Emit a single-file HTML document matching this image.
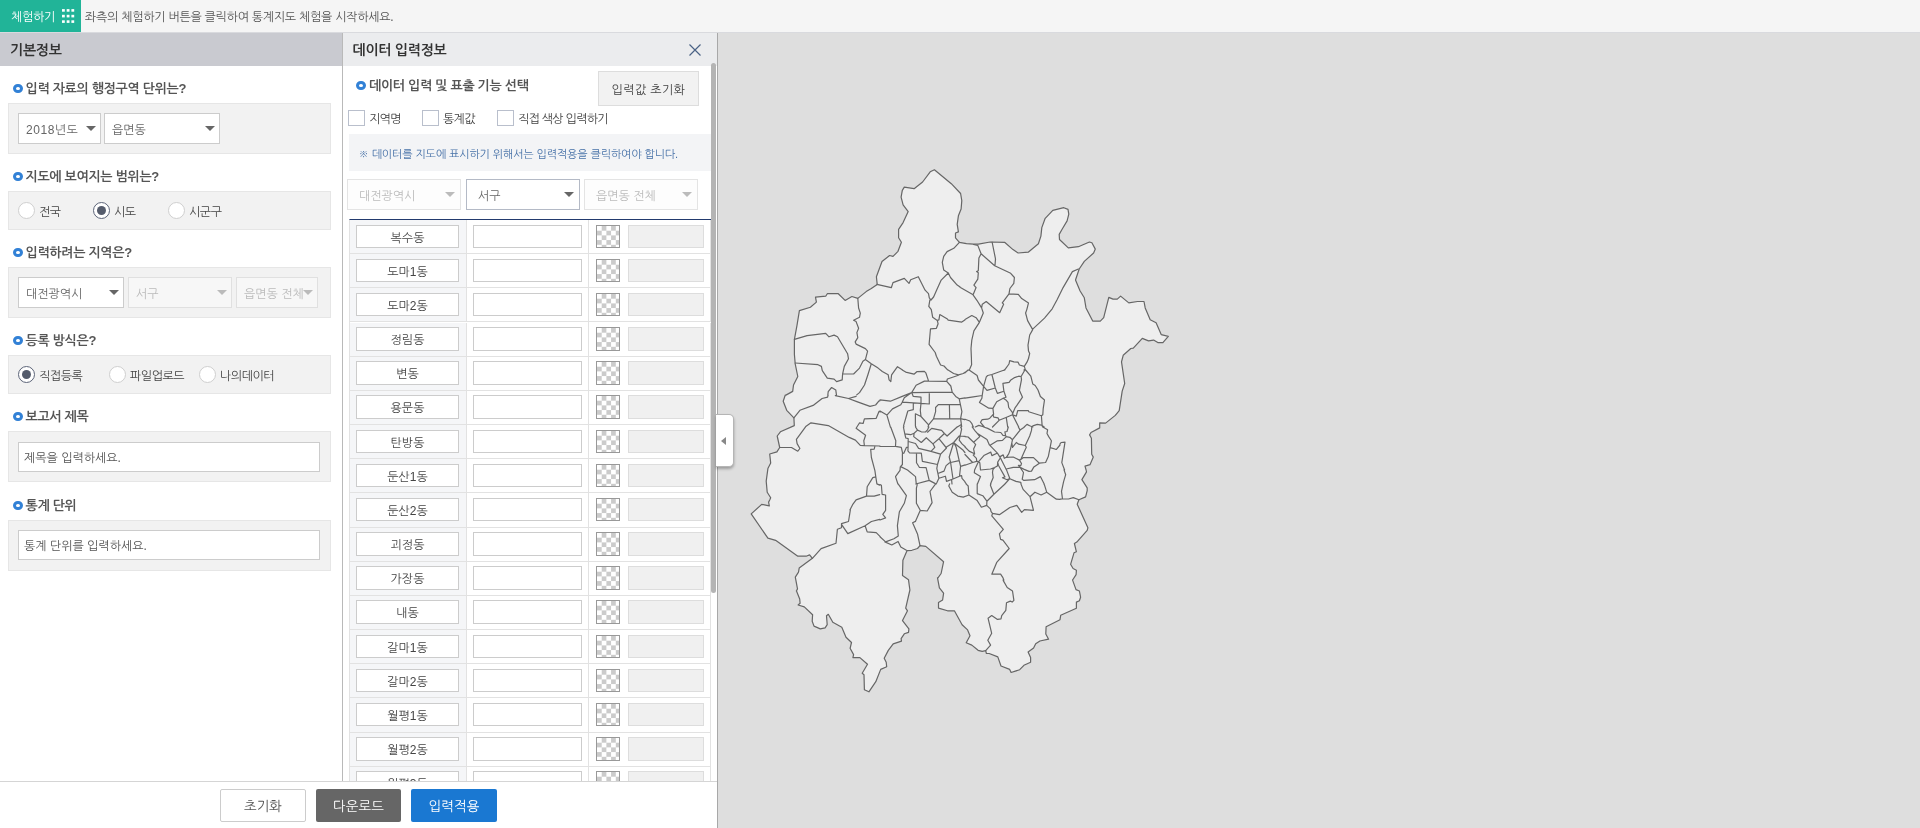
<!DOCTYPE html>
<html lang="ko">
<head>
<meta charset="utf-8">
<title>통계지도 체험하기</title>
<style>
*{box-sizing:border-box;margin:0;padding:0}
html,body{width:1920px;height:828px;overflow:hidden;background:#dedede}
body{font-family:"Liberation Sans","NanumGothic","Noto Sans CJK KR",sans-serif;font-size:12px;color:#444;position:relative}
.abs{position:absolute}
#wrap{position:absolute;left:0;top:0;width:1920px;height:828px;will-change:transform}
#topbar{left:0;top:0;width:1920px;height:32px;background:#f5f5f5}
#try{left:0;top:0;width:81px;height:32px;background:#21b498;color:#fff;font-size:12px;line-height:34px;padding-left:11px;letter-spacing:-0.3px}
#try i{position:absolute;width:3px;height:3px;background:#fff}
#toptxt{left:85px;top:0;height:32px;line-height:34px;font-size:12px;color:#555;letter-spacing:-0.25px;white-space:nowrap}
#left{left:0;top:32px;width:342px;height:750px;background:#fff}
#lefthd{left:0;top:32px;width:342px;height:34px;background:#c9cad0;font-size:14px;font-weight:bold;color:#333;line-height:36px;padding-left:10px;letter-spacing:-0.25px}
#vline{left:342px;top:32px;width:1px;height:750px;background:#b9b9b9}
#mid{left:343px;top:32px;width:374px;height:750px;background:#fff}
#midhd{left:343px;top:32px;width:374px;height:34px;background:#ebecee;font-size:14px;font-weight:bold;color:#333;line-height:36px;padding-left:9.5px;letter-spacing:-0.25px}
.st{font-size:13px;color:#555;font-weight:bold;letter-spacing:-0.3px;white-space:nowrap;height:20px;line-height:22px}
.bul{width:10px;height:9.4px;border-radius:50%;border:3.2px solid #3281d6;background:#fff}
.box{left:8px;width:323px;background:#f2f2f2;border:1px solid #e6e6e6}
.sel{height:31px;background:#fff;border:1px solid #ccc;font-size:12px;color:#666;line-height:33px;padding-left:7px;letter-spacing:0;white-space:nowrap;overflow:hidden}
.sel.dis{background:#f7f7f7;border-color:#e0e0e0;color:#bbb}
.sel:after{content:"";position:absolute;right:4px;top:12px;border-left:5px solid transparent;border-right:5px solid transparent;border-top:5.5px solid #666}
.sel.dis:after{border-top-color:#bbb}
.sel.m:after{right:5.5px}
.sel.dis.m{background:#fdfdfd;border-color:#e4e4e4}
.rad{width:17px;height:17px;border-radius:50%;background:#fff;border:1px solid #cfcfcf}
.rad.on{border:1.5px solid #5c6478}
.rad.on:after{content:"";position:absolute;left:2.5px;top:2.5px;width:9px;height:9px;border-radius:50%;background:#555c6c}
.rl{font-size:12px;color:#444;height:16px;line-height:16px;white-space:nowrap;letter-spacing:-0.45px}
.inp{background:#fff;border:1px solid #ccc;font-size:12px;letter-spacing:0;color:#555;white-space:nowrap}
.chk{width:17px;height:16px;background:#fff;border:1px solid #b9bfcc}
.row{position:absolute;left:0;width:361px;height:34.17px;border-bottom:1px solid #e2e2e2;border-right:1px solid #e2e2e2}
.row div{position:absolute}
.c1{left:0;top:0;width:117px;height:100%;background:#f5f6f8;border-right:1px solid #e2e2e2}
.nm{left:6px;top:4.6px;width:103px;height:23.5px;background:#fff;border:1px solid #ccc;font-size:12px;line-height:25px;overflow:hidden;text-align:center;color:#444;letter-spacing:0}
.vl{left:123px;top:4.6px;width:109px;height:23.5px;background:#fff;border:1px solid #ccc}
.vl:before{content:"";position:absolute;left:114px;top:-6px;width:1px;height:35px;background:#e2e2e2}
.sw{left:246px;top:4.6px;width:24px;height:23.5px;border:1px solid #999;background:repeating-conic-gradient(#cbcbcb 0 25%,#fff 0 50%) 0 0/9.4px 9.4px}
.ct{left:278px;top:4.6px;width:76px;height:23.5px;background:#f0f0f0;border:1px solid #ddd}
#bottom{left:0;top:781px;width:717px;height:47px;background:#fff;border-top:1px solid #d5d5d5}
.btn{top:789px;height:33px;line-height:36px;text-align:center;font-size:13.5px;border-radius:2px;letter-spacing:0px;overflow:hidden}
</style>
</head>
<body>
<div id="wrap">
<div id="topbar" class="abs"></div>
<div id="try" class="abs">체험하기</div>
<svg class="abs" style="left:60px;top:8px" width="16" height="16" viewBox="60 8 16 16" fill="#fff"><rect x="62" y="9.1" width="2.8" height="2.6"/><rect x="66.7" y="9.1" width="2.8" height="2.6"/><rect x="71.4" y="9.1" width="2.8" height="2.6"/><rect x="62" y="14.8" width="2.8" height="2.6"/><rect x="66.7" y="14.8" width="2.8" height="2.6"/><rect x="71.4" y="14.8" width="2.8" height="2.6"/><rect x="62" y="20.3" width="2.8" height="2.6"/><rect x="66.7" y="20.3" width="2.8" height="2.6"/><rect x="71.4" y="20.3" width="2.8" height="2.6"/></svg>
<div id="toptxt" class="abs">좌측의 체험하기 버튼을 클릭하여 통계지도 체험을 시작하세요.</div>

<div id="left" class="abs"></div>
<div id="lefthd" class="abs">기본정보</div>
<div id="mid" class="abs"></div>
<div id="midhd" class="abs">데이터 입력정보</div>
<div id="vline" class="abs"></div>
<div class="abs" style="left:0;top:32px;width:717px;height:1px;background:#d9dade"></div>

<!-- LEFT-CONTENT -->
<!-- section 1 -->
<div class="abs bul" style="left:13px;top:84px"></div>
<div class="abs st" style="left:25.5px;top:78px">입력 자료의 행정구역 단위는?</div>
<div class="abs box" style="top:103px;height:51px"></div>
<div class="abs sel" style="left:18px;top:113px;width:83px"><span style="letter-spacing:0.6px">2018</span>년도</div>
<div class="abs sel" style="left:104px;top:113px;width:116px">읍면동</div>
<!-- section 2 -->
<div class="abs bul" style="left:13px;top:172px"></div>
<div class="abs st" style="left:25.5px;top:166px">지도에 보여지는 범위는?</div>
<div class="abs box" style="top:191px;height:39px"></div>
<div class="abs rad" style="left:18px;top:202px"></div><div class="abs rl" style="left:39px;top:204px">전국</div>
<div class="abs rad on" style="left:93px;top:202px"></div><div class="abs rl" style="left:114px;top:204px">시도</div>
<div class="abs rad" style="left:168px;top:202px"></div><div class="abs rl" style="left:189px;top:204px">시군구</div>
<!-- section 3 -->
<div class="abs bul" style="left:13px;top:248px"></div>
<div class="abs st" style="left:25.5px;top:242px">입력하려는 지역은?</div>
<div class="abs box" style="top:267px;height:51px"></div>
<div class="abs sel" style="left:18px;top:277px;width:106px">대전광역시</div>
<div class="abs sel dis" style="left:128px;top:277px;width:104px">서구</div>
<div class="abs sel dis" style="left:236px;top:277px;width:82px">읍면동 전체</div>
<!-- section 4 -->
<div class="abs bul" style="left:13px;top:336px"></div>
<div class="abs st" style="left:25.5px;top:330px">등록 방식은?</div>
<div class="abs box" style="top:355px;height:39px"></div>
<div class="abs rad on" style="left:18px;top:366px"></div><div class="abs rl" style="left:39px;top:368px">직접등록</div>
<div class="abs rad" style="left:109px;top:366px"></div><div class="abs rl" style="left:130px;top:368px">파일업로드</div>
<div class="abs rad" style="left:199px;top:366px"></div><div class="abs rl" style="left:220px;top:368px">나의데이터</div>
<!-- section 5 -->
<div class="abs bul" style="left:13px;top:412px"></div>
<div class="abs st" style="left:25.5px;top:406px">보고서 제목</div>
<div class="abs box" style="top:431px;height:51px"></div>
<div class="abs inp" style="left:18px;top:442px;width:302px;height:30px;line-height:31px;padding-left:5px">제목을 입력하세요.</div>
<!-- section 6 -->
<div class="abs bul" style="left:13px;top:501px"></div>
<div class="abs st" style="left:25.5px;top:495px">통계 단위</div>
<div class="abs box" style="top:520px;height:51px"></div>
<div class="abs inp" style="left:18px;top:530px;width:302px;height:30px;line-height:31px;padding-left:5px">통계 단위를 입력하세요.</div>


<!-- MID-CONTENT -->
<svg class="abs" style="left:688px;top:43px" width="14" height="14" viewBox="0 0 14 14"><path d="M1.5 1.5L12.5 12.5M12.5 1.5L1.5 12.5" stroke="#4a6285" stroke-width="1.2" fill="none"/></svg>
<div class="abs bul" style="left:356px;top:80.6px"></div>
<div class="abs st" style="left:369px;top:75px">데이터 입력 및 표출 기능 선택</div>
<div class="abs" style="left:598px;top:71px;width:101px;height:35px;background:#f2f2f2;border:1px solid #ddd;font-size:12px;line-height:37px;overflow:hidden;text-align:center;color:#444;letter-spacing:0.4px">입력값 초기화</div>
<div class="abs chk" style="left:348px;top:110px"></div><div class="abs rl" style="left:369px;top:111px;letter-spacing:-0.7px">지역명</div>
<div class="abs chk" style="left:422px;top:110px"></div><div class="abs rl" style="left:443px;top:111px;letter-spacing:-0.7px">통계값</div>
<div class="abs chk" style="left:497px;top:110px"></div><div class="abs rl" style="left:518px;top:111px;letter-spacing:-0.7px">직접 색상 입력하기</div>
<div class="abs" style="left:349px;top:134px;width:362px;height:37px;background:#f3f4f6"></div>
<div class="abs" style="left:358.5px;top:134px;height:37px;line-height:40px;font-size:11px;color:#4872a8;letter-spacing:-0.13px;white-space:nowrap">※ 데이터를 지도에 표시하기 위해서는 입력적용을 클릭하여야 합니다.</div>
<div class="abs sel dis m" style="left:347px;top:179px;width:114px;padding-left:11px">대전광역시</div>
<div class="abs sel m" style="left:466px;top:179px;width:114px;padding-left:11px;border-color:#b4bac6">서구</div>
<div class="abs sel dis m" style="left:584px;top:179px;width:114px;padding-left:11px">읍면동 전체</div>
<div id="tbl" class="abs" style="left:349px;top:219px;width:362px;height:562px;overflow:hidden;border-top:1px solid #223a6e;border-left:1px solid #e2e2e2">
<div class="row" style="top:0.0px"><div class="c1"></div><div class="nm">복수동</div><div class="vl"></div><div class="sw"></div><div class="ct"></div></div>
<div class="row" style="top:34.17px"><div class="c1"></div><div class="nm">도마1동</div><div class="vl"></div><div class="sw"></div><div class="ct"></div></div>
<div class="row" style="top:68.34px"><div class="c1"></div><div class="nm">도마2동</div><div class="vl"></div><div class="sw"></div><div class="ct"></div></div>
<div class="row" style="top:102.51px"><div class="c1"></div><div class="nm">정림동</div><div class="vl"></div><div class="sw"></div><div class="ct"></div></div>
<div class="row" style="top:136.68px"><div class="c1"></div><div class="nm">변동</div><div class="vl"></div><div class="sw"></div><div class="ct"></div></div>
<div class="row" style="top:170.85px"><div class="c1"></div><div class="nm">용문동</div><div class="vl"></div><div class="sw"></div><div class="ct"></div></div>
<div class="row" style="top:205.02px"><div class="c1"></div><div class="nm">탄방동</div><div class="vl"></div><div class="sw"></div><div class="ct"></div></div>
<div class="row" style="top:239.19px"><div class="c1"></div><div class="nm">둔산1동</div><div class="vl"></div><div class="sw"></div><div class="ct"></div></div>
<div class="row" style="top:273.36px"><div class="c1"></div><div class="nm">둔산2동</div><div class="vl"></div><div class="sw"></div><div class="ct"></div></div>
<div class="row" style="top:307.53px"><div class="c1"></div><div class="nm">괴정동</div><div class="vl"></div><div class="sw"></div><div class="ct"></div></div>
<div class="row" style="top:341.7px"><div class="c1"></div><div class="nm">가장동</div><div class="vl"></div><div class="sw"></div><div class="ct"></div></div>
<div class="row" style="top:375.87px"><div class="c1"></div><div class="nm">내동</div><div class="vl"></div><div class="sw"></div><div class="ct"></div></div>
<div class="row" style="top:410.04px"><div class="c1"></div><div class="nm">갈마1동</div><div class="vl"></div><div class="sw"></div><div class="ct"></div></div>
<div class="row" style="top:444.21px"><div class="c1"></div><div class="nm">갈마2동</div><div class="vl"></div><div class="sw"></div><div class="ct"></div></div>
<div class="row" style="top:478.38px"><div class="c1"></div><div class="nm">월평1동</div><div class="vl"></div><div class="sw"></div><div class="ct"></div></div>
<div class="row" style="top:512.55px"><div class="c1"></div><div class="nm">월평2동</div><div class="vl"></div><div class="sw"></div><div class="ct"></div></div>
<div class="row" style="top:546.72px"><div class="c1"></div><div class="nm">월평3동</div><div class="vl"></div><div class="sw"></div><div class="ct"></div></div>
</div>
<div class="abs" style="left:711px;top:63px;width:5px;height:530px;background:#b4b4b4;border-radius:2.5px"></div>


<div class="abs" style="left:717px;top:32px;width:1203px;height:1px;background:#d9dade"></div>
<div class="abs" style="left:717px;top:33px;width:1px;height:795px;background:#a8a8a8"></div>
<div class="abs" style="left:716px;top:414px;width:17.6px;height:52.5px;background:#fff;border-radius:0 5px 5px 0;border:1px solid #b5b5b5;border-left:none;box-shadow:0 2px 3px rgba(0,0,0,.3)"></div>
<div class="abs" style="left:721px;top:437px;width:0;height:0;border-top:4px solid transparent;border-bottom:4px solid transparent;border-right:5px solid #888"></div>
<!-- MAP-START -->
<svg class="abs" style="left:717px;top:32px" width="1203" height="796" viewBox="717 32 1203 796">
<path d="M785.9 395.1 L792.7 391.4 L793.5 385.0 L797.8 376.5 L795.2 363.8 L794.4 354.5 L794.4 339.3 L796.9 325.8 L799.4 310.6 L810.4 307.2 L816.4 302.1 L815.5 297.1 L825.7 296.2 L827.3 293.7 L838.3 293.7 L845.1 300.4 L851.9 296.5 L857.8 298.4 L866.2 291.6 L871.3 288.6 L877.2 284.4 L876.4 276.7 L882.0 261.5 L889.6 255.5 L893.0 256.4 L898.0 251.3 L901.4 242.3 L898.6 237.8 L898.6 229.3 L903.1 222.6 L908.2 211.6 L903.1 204.8 L901.1 197.2 L902.3 190.4 L904.3 187.1 L914.1 188.7 L922.6 182.0 L930.2 171.8 L934.4 169.8 L951.3 183.7 L960.6 193.5 L961.8 200.6 L961.1 209.0 L958.4 215.8 L957.2 224.3 L958.4 231.9 L955.5 233.0 L955.5 237.8 L959.4 242.3 L966.5 243.7 L973.3 244.2 L978.4 244.2 L990.2 242.0 L1004.6 242.3 L1013.0 249.6 L1018.1 253.0 L1028.2 252.2 L1038.4 243.7 L1040.9 236.1 L1041.8 227.6 L1045.2 218.3 L1052.8 210.4 L1063.8 207.7 L1068.0 209.4 L1068.8 214.1 L1067.1 220.9 L1062.1 229.3 L1059.2 234.4 L1059.5 239.5 L1068.3 247.9 L1078.4 246.7 L1089.4 242.0 L1091.9 242.8 L1095.3 249.1 L1093.6 253.0 L1084.3 261.4 L1079.2 269.0 L1075.5 280.0 L1080.1 291.0 L1084.3 297.8 L1086.0 307.9 L1092.7 321.1 L1100.3 321.1 L1103.7 317.7 L1108.8 297.4 L1113.0 299.1 L1117.3 299.1 L1120.6 296.1 L1128.8 302.9 L1137.5 301.5 L1144.0 301.5 L1145.2 307.9 L1150.2 319.8 L1156.1 322.8 L1161.2 334.6 L1168.3 336.3 L1162.9 342.6 L1157.8 342.6 L1153.6 340.1 L1148.5 340.9 L1142.3 338.4 L1133.3 348.2 L1130.8 348.5 L1123.2 355.3 L1122.0 360.0 L1121.5 361.9 L1124.7 383.5 L1122.2 391.1 L1119.2 410.6 L1115.3 415.4 L1105.6 423.1 L1099.7 422.8 L1099.7 427.9 L1091.0 432.5 L1089.6 434.9 L1091.4 438.3 L1091.7 454.3 L1093.3 457.1 L1090.0 464.7 L1085.0 466.1 L1086.1 470.0 L1086.5 471.9 L1081.9 479.6 L1087.2 487.9 L1087.2 490.7 L1085.6 496.9 L1078.9 499.7 L1077.2 504.2 L1087.9 527.8 L1087.2 530.3 L1076.8 542.1 L1074.4 543.5 L1076.4 551.8 L1074.0 552.8 L1070.6 564.3 L1073.1 568.5 L1076.4 570.3 L1076.1 574.7 L1072.6 580.0 L1072.5 579.9 L1076.0 589.6 L1079.4 591.0 L1080.6 597.2 L1079.4 600.7 L1076.4 602.1 L1076.4 608.3 L1060.7 615.3 L1060.0 619.7 L1046.1 626.7 L1045.8 634.0 L1048.6 639.2 L1039.9 641.0 L1035.7 643.8 L1033.6 647.9 L1028.1 652.1 L1030.6 657.6 L1030.6 662.2 L1023.9 665.3 L1019.7 669.7 L1011.1 672.5 L1009.7 669.4 L1001.0 666.0 L997.8 656.9 L989.2 653.5 L986.4 653.5 L985.7 650.7 L982.2 651.4 L978.1 650.3 L971.8 645.1 L966.2 642.8 L970.0 635.8 L967.6 629.9 L962.1 624.7 L954.4 610.8 L947.5 610.8 L938.5 608.1 L938.5 602.5 L942.6 600.0 L943.6 593.1 L939.4 587.8 L937.5 577.8 L937.6 578.3 L941.1 573.5 L943.6 561.7 L925.8 546.4 L920.0 545.7 L917.5 548.5 L911.9 550.3 L907.1 550.6 L902.9 560.3 L902.5 575.6 L908.5 579.7 L909.2 585.0 L909.9 590.0 L905.7 608.1 L907.5 610.8 L902.5 620.6 L908.9 628.9 L908.5 632.4 L904.3 633.8 L901.1 638.6 L901.5 641.1 L893.2 643.9 L888.3 650.4 L884.2 658.3 L886.2 662.2 L886.7 666.7 L880.7 669.4 L875.8 681.7 L868.9 691.8 L864.4 689.7 L864.0 674.7 L862.2 673.3 L867.5 664.3 L859.9 657.6 L852.9 657.6 L853.6 654.6 L850.1 648.3 L851.5 642.5 L846.0 637.2 L841.8 627.2 L832.8 622.2 L828.3 614.3 L826.5 615.7 L827.2 624.7 L825.1 627.8 L820.3 628.9 L814.0 626.1 L812.2 621.2 L812.6 614.7 L804.3 606.9 L798.1 605.0 L800.1 603.2 L799.7 599.0 L796.4 590.7 L796.4 591.0 L797.5 588.9 L795.3 577.1 L798.5 572.2 L799.2 568.1 L812.4 558.3 L809.6 554.9 L806.1 556.2 L797.8 556.2 L775.6 540.3 L767.9 538.2 L751.2 513.9 L761.7 504.4 L769.3 505.8 L768.6 502.1 L769.7 500.0 L770.7 497.8 L767.2 492.2 L766.2 481.1 L767.9 468.6 L770.7 463.1 L769.7 454.0 L776.9 451.9 L779.7 447.5 L777.2 436.0 L780.4 431.8 L794.3 425.6 L793.9 417.9 L786.7 410.3 L783.2 401.2 L785.3 395.0Z" fill="#eeeeee" stroke="#666" stroke-width="1.2" stroke-linejoin="round"/>
<path d="M876.9 284.3 L891.3 287.7 L893.0 282.6 L904.3 278.4 L909.0 283.4 L910.7 279.7 L918.3 276.7 L925.1 290.2 L928.5 293.6 L929.3 297.8 L931.0 300.0M959.4 242.3 L953.8 248.3 L947.1 251.6 L943.7 256.4 L942.3 262.3 L943.7 269.9 L948.3 273.0 L941.2 280.1 L936.9 289.4 L933.6 297.0 L931.0 300.0M948.3 273.0 L950.5 277.5 L957.2 285.1 L960.1 287.1M960.0 287.3 L972.7 294.4 L976.9 300.3 L981.6 307.9 L983.3 313.0 L979.4 322.3 L973.9 330.8 L971.8 340.1 L971.0 348.5 L971.4 357.8M965.0 319.4 L971.8 315.5 L976.1 317.7 L979.4 322.3M973.5 244.5 L977.8 245.4 L981.1 253.8 L978.9 258.0 L978.3 270.7 L976.6 271.6 L978.3 272.8 L977.8 279.2 L973.9 285.1 L976.1 287.6 L973.2 294.4M981.1 253.8 L994.7 265.7 L1010.7 273.3 L1014.4 277.5 L1013.8 283.4 L1009.9 288.5 L1009.0 293.9 L1002.3 302.9 L1003.6 304.2 L999.7 312.7 L986.2 301.5 L982.3 304.2 L981.6 307.9M992.1 242.0 L995.5 258.9 L995.0 265.3M1078.4 269.0 L1072.4 271.6 L1063.1 287.6 L1057.2 299.5 L1052.2 308.8 L1044.5 318.1 L1032.7 329.1M1009.0 293.9 L1018.3 294.4 L1021.7 298.6 L1028.5 302.9 L1026.8 309.6 L1025.6 313.0 L1027.6 320.6 L1032.7 329.6 L1029.7 335.0 L1028.0 345.1 L1028.5 351.0 L1029.7 353.6 L1028.6 357.9M929.9 299.9 L928.8 306.4 L931.3 309.7 L932.7 317.3 L937.3 320.4 L938.9 319.9 L939.8 314.5 L947.4 319.0 L948.2 320.2 L961.8 322.1 L964.8 320.1M937.3 320.4 L938.1 323.8 L936.4 328.3 L930.5 328.8 L929.1 344.4 L935.2 352.5 L936.4 356.2 L940.6 365.0 L944.0 366.0 L947.6 369.9M968.7 370.1 L969.4 369.8 L971.6 364.7 L971.4 358.3M794.4 339.3 L807.1 335.6 L825.7 333.4 L829.0 336.8 L834.1 335.1 L837.5 336.8 L847.6 353.7 L848.5 358.8 L844.3 366.4 L842.6 374.0 L842.2 379.9 L836.6 381.6 L834.1 379.1 L827.3 378.2 L822.3 370.6 L821.4 366.4 L818.0 364.7 L795.2 363.0M842.6 374.0 L853.6 374.0 L859.5 368.1 L862.9 361.3 L865.4 359.6 L867.6 351.2 L865.4 348.6 L856.1 344.1 L855.2 341.9 L857.8 337.6 L856.9 332.6 L858.6 328.3 L856.1 321.6 L853.6 320.2 L859.5 317.3 L860.3 313.1 L858.6 308.0 L857.8 298.4M865.4 359.6 L871.3 363.8 L878.1 368.1 L882.3 371.5 L888.2 374.8 L889.1 379.9 L890.8 381.6 L891.6 374.8 L897.5 366.7 L902.6 369.9M871.3 363.8 L867.9 374.8 L864.5 385.0 L859.5 392.6 L856.7 394.9M836.5 395.3 L835.8 390.1 L831.6 387.5 L828.2 391.7 L827.8 395.3M880.0 399.9 L890.4 401.2 L902.2 396.4 L911.7 392.6 L916.1 385.3 L924.4 381.1 L928.6 381.1 L946.7 381.4 L950.8 386.0 L952.2 392.2 L955.7 396.4 L959.2 398.8 L961.9 411.7 L960.6 418.6 L961.7 426.8M911.7 392.6 L952.2 392.2M928.6 381.1 L925.8 372.8 L924.4 371.4 L916.8 371.7 L914.0 374.2 L905.7 372.1 L902.2 370.0M946.7 381.4 L947.4 379.0 L958.5 375.3M948.1 370.1 L953.6 373.5 L958.5 374.9 L963.3 373.5 L965.1 372.2M959.2 398.8 L965.0 397.9M1055.0 449.2 L1056.4 449.4 L1060.0 445.0M960.6 418.6 L964.7 419.6M880.0 411.0 L886.9 415.1 L890.5 427.3M886.9 415.1 L892.5 408.9 L900.8 404.7 L902.2 402.2 L904.3 397.8 L911.7 392.6M902.2 402.2 L921.0 403.3 L921.0 397.1 L913.3 396.4 L911.7 392.6M921.0 403.3 L929.3 404.0 L929.3 392.6M913.3 403.3 L913.3 409.6 L907.8 411.0 L903.6 425.6 L903.9 427.0M915.8 427.0 L915.4 425.6 L915.4 413.8 L921.0 416.5 L920.3 410.3 L921.0 403.3M921.0 416.5 L928.6 424.9 L928.1 427.0M928.6 424.9 L933.5 418.9 L935.6 411.7 L935.6 407.5 L938.3 404.7 L959.9 404.3M949.4 404.7 L949.7 418.6M933.5 418.9 L960.6 418.6M956.9 427.2 L960.6 424.9M898.1 483.9 L906.4 495.7 L904.3 503.3 L899.4 511.7 L897.4 525.6 L898.3 536.0 L893.9 538.8 L885.6 541.9 L880.0 536.7M884.9 541.9 L891.8 545.0 L898.1 541.5 L900.8 547.1 L906.4 550.3M920.0 545.7 L917.5 533.9 L912.6 522.8 L915.4 521.4 L920.3 510.3 L916.4 503.3 L916.4 488.1 L917.3 484.3M920.3 510.3 L927.2 511.0 L932.1 502.6 L930.0 491.5 L935.6 483.9M949.6 483.9 L948.8 486.0 L952.2 492.2 L957.8 496.1 L963.3 497.1 L968.9 495.0 L968.2 486.0 L966.0 483.8M968.9 495.0 L977.2 500.6 L981.4 507.2 L986.7 505.4 L986.9 501.2 L982.8 495.7 L977.2 493.6 L977.2 483.9M986.9 501.2 L993.9 494.3 L1004.7 484.2M1020.9 483.9 L1023.1 489.4 L1030.0 496.7 L1033.5 510.3 L1024.4 509.6 L1021.7 512.4 L1016.8 505.4 L1009.9 507.5 L999.4 514.7 L992.5 513.3 L991.8 515.8M986.7 505.4 L990.4 508.9 L991.1 511.7 L992.5 513.3M993.9 494.3 L990.4 485.3 L990.9 483.9M1044.0 484.0 L1044.6 485.3 L1046.7 492.2 L1041.1 495.0 L1034.9 492.2 L1030.0 496.7M1046.7 492.2 L1056.4 499.2 L1060.0 499.4M991.8 515.8 L1003.3 529.4 L999.4 533.9 L1000.6 539.4 L1002.9 540.1 L1009.2 548.5 L996.7 562.4 L991.8 574.2 L1000.6 574.2 L1002.9 577.6 L1003.9 580.3M880.0 484.6 L881.4 485.3 L882.1 494.3 L885.6 495.0 L885.6 510.3 L882.8 514.4 L885.6 517.9 L880.0 520.0M793.9 417.9 L799.9 410.3 L813.1 405.4 L822.1 398.5 L827.6 397.1 L828.1 395.0M779.7 447.5 L791.5 447.5 L797.8 451.2 L799.9 448.5 L797.1 443.6 L796.4 439.4 L806.1 426.2 L811.0 422.8 L828.3 425.6 L849.2 437.4 L855.4 440.1 L860.3 445.3 L864.4 445.7 L880.0 446.0M864.4 445.7 L863.8 440.8 L865.6 435.3 L856.1 428.3 L859.6 422.8 L863.1 423.5 L864.4 418.9 L876.2 418.3 L879.0 411.4 L880.3 412.0M835.3 395.7 L848.5 398.5 L856.1 396.4M848.5 398.5 L857.5 401.9 L870.0 406.4 L875.6 405.0 L879.0 400.8 L879.7 400.9M874.9 446.2 L874.2 449.2 L870.7 449.4 L871.4 457.5 L874.9 470.7 L875.8 476.9 L872.8 477.6 L867.2 486.7 L866.5 496.1 L874.2 496.1 L879.7 494.6M879.7 485.1 L876.9 483.9 L875.8 476.9M866.5 496.1 L856.1 499.9 L852.6 504.7 L849.9 510.0M812.4 558.3 L821.1 548.6 L836.0 543.3 L837.4 529.2 L841.5 527.8 L841.5 523.6 L848.5 521.5 L850.4 509.7M841.5 524.3 L847.8 533.6 L865.1 525.7 L871.4 521.5 L879.7 519.3M865.1 525.7 L867.2 531.9 L876.2 532.6 L880.2 536.7M985.7 650.7 L990.6 645.1 L987.8 640.3 L991.7 633.3 L988.1 618.3 L991.7 615.6 L997.5 619.4 L1001.0 618.8 L1001.7 615.6 L1005.8 610.4 L1006.5 602.8 L1010.3 601.1 L1012.1 602.1 L1013.9 600.3 L1012.5 591.0 L1007.2 587.5 L1003.3 580.6 L1003.1 579.9M1078.9 499.7 L1073.3 497.6 L1068.5 499.0 L1062.5 499.0 L1060.2 499.1M1062.5 499.0 L1061.5 491.4 L1063.6 481.7 L1065.7 474.7 L1064.0 469.9M1028.8 357.8 L1027.1 361.9 L1024.3 366.4 L1019.4 365.0 L1018.1 362.2 L1013.9 361.9 L1009.7 360.6 L1009.0 364.0 L1004.9 369.6 L1004.3 370.0M1024.3 366.4 L1025.3 369.6 L1025.8 370.2M1024.0 370.3 L1024.3 369.6M1059.9 444.2 L1061.1 442.5 L1065.0 442.2 L1061.8 462.6 L1064.6 470.0M965.0 372.8 L968.1 370.0M969.1 370.0 L977.1 375.5 L978.4 380.0 L983.6 386.4 L987.0 390.3 L995.3 388.0M983.6 386.4 L986.3 376.9 L987.7 375.5 L991.9 374.5 L995.3 388.0 L997.4 393.4 L1003.9 391.3M991.9 374.5 L1003.6 370.3 L1004.9 370.0M983.6 386.4 L982.2 395.5 L973.3 396.9 L965.0 398.1M982.2 395.5 L981.9 398.2 L979.5 402.4 L988.8 408.2 L992.9 408.4 L996.7 401.7 L1003.2 398.2 L1006.0 397.2 L1003.9 391.3 L1002.9 383.4 L1009.1 382.4 L1010.5 380.3 L1014.6 377.6 L1018.7 376.2 L1021.1 376.5 L1024.9 370.0M1025.6 370.0 L1030.8 376.2 L1032.8 384.1 L1035.2 385.5 L1038.0 390.0 L1040.4 396.5 L1044.5 400.0 L1043.2 408.6 L1042.8 414.8 L1041.4 415.8M1021.1 376.5 L1021.5 379.6 L1019.4 390.3 L1022.5 397.2 L1014.9 408.2 L1012.9 413.0 L1012.5 414.8M1003.2 398.2 L1006.3 400.3 L1008.0 402.4 L1008.7 407.5 L1012.5 412.7 L1012.5 414.8 L1016.3 416.1 L1017.7 410.6 L1028.4 410.6 L1028.7 411.7 L1041.4 415.8 L1042.1 425.1 L1042.5 427.0M1012.5 414.8 L1006.0 417.5 L999.1 420.3 L992.5 427.0M992.9 408.4 L993.6 414.1 L993.2 415.5 L993.9 417.2 L998.1 417.9 L999.1 420.3M993.2 414.4 L989.8 418.2 L987.7 419.2 L982.2 419.6 L980.5 422.3 L984.3 427.0M1012.5 414.8 L1018.7 427.0M1006.3 417.9 L1007.7 427.0M965.0 419.2 L969.8 421.0 L971.9 423.7 L973.3 427.0M1024.2 427.0 L1027.0 424.4 L1029.7 425.8 L1032.8 427.0M1032.8 425.9 L1037.3 424.4 L1041.4 425.1 L1044.2 427.0M975.3 427.0 L978.8 425.4 L984.3 427.0M972.2 427.0 L975.3 431.1 L977.1 433.2 L979.8 436.6 L973.6 442.2M977.1 433.2 L987.0 439.4 L989.4 444.9 L997.4 453.2 L1000.1 457.3 L1003.6 464.2 L1007.0 471.1 L1009.8 478.5M965.0 436.6 L968.1 437.0 L973.6 442.2 L975.7 444.6 L973.6 449.0 L974.6 453.9 L973.3 455.2 L976.4 458.3 L976.7 461.1 L978.4 461.8M965.0 447.0 L969.1 451.1 L974.0 453.5M965.0 454.5 L972.6 462.5 L976.7 461.4M965.0 465.2 L972.6 462.5M978.4 461.8 L984.3 455.2 L990.8 452.1 L991.9 455.6 L997.0 453.2M978.4 461.8 L979.8 462.8 L980.5 470.0 L990.5 469.0 L994.6 467.6 L997.4 465.9 L997.7 462.1 L1000.1 458.3M978.4 461.8 L974.6 470.0 L974.3 472.8 L980.5 476.6 L977.4 484.0M994.6 467.6 L992.9 469.7 L992.5 472.5 L993.2 477.6 L990.5 484.0M983.6 427.0 L987.7 428.4 L994.6 432.0 L1000.8 432.5 L1003.0 435.3 L1005.6 435.6 L1004.9 431.8 L1007.0 431.5 L1008.3 427.0M990.5 444.9 L997.4 440.8 L1002.5 440.4 L1006.3 436.6 L1005.6 435.6M1006.3 436.6 L1009.8 437.3 L1012.5 439.7 L1020.1 430.1 L1024.2 427.3M1018.4 427.0 L1020.1 430.1M1012.5 439.7 L1011.8 442.8 L1010.5 449.0 L1008.7 453.9 L1006.3 457.3 L1004.3 458.3 L1003.2 454.9 L1000.1 456.6M1011.8 442.8 L1012.5 447.3 L1016.3 442.5 L1018.7 444.2 L1025.3 445.5 L1029.7 436.0 L1031.5 430.4 L1031.8 427.0M1025.3 445.5 L1026.3 447.3 L1020.8 459.4 L1019.4 460.1M1006.3 457.3 L1013.2 457.0 L1019.4 460.1 L1021.5 463.5 L1020.8 465.6 L1018.4 465.4 L1020.1 467.3 L1024.2 469.4 L1029.0 471.4 L1031.5 471.1 L1033.9 466.9 L1039.4 463.2 L1033.5 457.6 L1023.5 457.6 L1020.8 459.4M1039.4 463.2 L1045.6 462.5 L1048.3 456.6 L1050.1 447.7 L1051.4 440.8 L1048.7 436.6 L1047.0 433.5 L1047.6 429.8 L1042.8 427.0M1050.1 447.7 L1055.0 449.0M997.7 462.1 L998.4 465.2 L1004.9 476.9 L1002.5 477.8 L1007.0 479.7 L1009.8 478.5M1006.3 469.0 L1013.2 467.3 L1020.1 467.3 L1023.5 472.5 L1022.2 479.3 L1023.9 480.4 L1034.6 479.7 L1040.4 476.6 L1044.2 484.0M1009.8 478.7 L1016.0 481.4 L1020.8 482.4 L1021.1 484.0M1009.8 478.7 L1004.9 484.0M965.0 482.1 L966.4 484.0M890.7 427.0 L895.8 440.8 L895.5 446.3M880.0 446.5 L895.5 446.3 L901.3 447.3 L902.7 453.5 L903.8 453.2 L906.5 447.3 L908.1 447.3M903.4 427.0 L904.8 433.9 L905.8 438.0 L908.2 438.7 L908.1 447.3 L907.9 450.8 L909.6 453.0 L921.3 453.2 L922.4 461.4 L937.5 464.5M904.8 433.9 L910.6 434.7 L914.1 433.2 L917.5 430.1 L915.5 427.0M917.5 430.1 L921.3 431.8 L925.5 432.0 L927.5 429.8 L928.9 427.0M914.1 433.2 L913.7 436.6 L921.3 442.5 L926.3 437.7 L933.0 443.9 L934.8 447.3 L931.0 451.4M908.4 441.5 L915.5 443.5 L918.6 448.3 L931.0 451.4 L940.6 454.2 L937.5 464.5M927.5 432.2 L931.7 428.4 L941.6 430.4 L944.4 433.5 L947.1 436.0 L957.1 427.0M933.0 443.9 L938.9 438.7 L944.4 433.5M938.9 438.7 L946.5 448.0 L940.6 454.2M946.5 447.0 L953.7 442.5 L959.2 436.0 L960.2 435.6 L961.6 429.1 L960.6 427.0M959.2 436.0 L965.2 436.4M960.2 435.6 L959.2 440.1 L962.0 443.9 L965.2 446.8M954.4 443.2 L962.6 449.7 L964.9 452.5M953.7 442.5 L949.2 457.0 L950.6 462.5 L953.0 479.0M950.6 462.5 L959.2 460.7M953.7 442.5 L956.1 447.0 L959.2 460.7 L960.6 466.3 L959.5 476.2 L961.6 475.6 L962.0 478.3 L964.9 481.7M960.6 466.3 L965.3 464.9M949.6 462.8 L946.1 465.6 L944.0 471.1 L937.9 473.5M937.5 464.5 L936.8 468.3 L937.9 473.5 L938.9 478.3 L936.8 482.8 L936.1 484.0M938.9 478.3 L945.4 476.2 L946.5 481.4 L953.0 479.0 L959.5 476.2M951.6 479.5 L952.0 484.0M916.5 453.5 L916.5 462.8 L919.3 467.3 L926.1 467.6 L929.2 480.4M902.4 453.5 L902.4 464.5 L900.3 466.9 L900.0 470.4 L895.5 476.6 L897.9 484.0M900.7 466.6 L907.5 470.0 L915.5 476.6 L916.2 483.1M915.8 484.0 L929.2 480.4 L934.4 483.1 L936.1 484.0" fill="none" stroke="#666" stroke-width="1.2" stroke-linejoin="round" stroke-linecap="round"/>
</svg>
<!-- MAP-END -->

<div id="bottom" class="abs"></div>
<div class="abs btn" style="left:220px;width:86px;background:#fff;border:1px solid #ccc;color:#555;line-height:34px">초기화</div>
<div class="abs btn" style="left:316px;width:85px;background:#666;color:#fff">다운로드</div>
<div class="abs btn" style="left:411px;width:86px;background:#1a78d2;color:#fff">입력적용</div>
</div>
</body>
</html>
